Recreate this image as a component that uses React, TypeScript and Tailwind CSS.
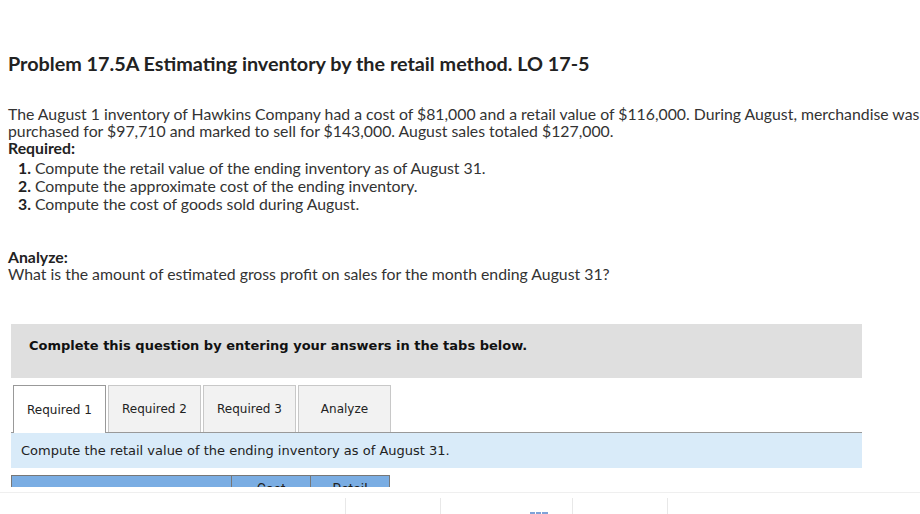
import React from 'react';

const tabs = ['Required 1', 'Required 2', 'Required 3', 'Analyze'];

function Tabs() {
  return (
    <div className="flex items-end gap-[2px] pl-[2px] border-b border-[#999]">
      {tabs.map((t, i) =>
        i === 0 ? (
          <div
            key={t}
            className="w-[93px] h-[48px] -mb-px flex items-center justify-center bg-white border border-b-0 border-[#999] text-[12px] text-[#222]"
          >
            {t}
          </div>
        ) : (
          <div
            key={t}
            className="w-[93px] h-[47px] flex items-center justify-center bg-[#f2f2f2] border border-b-0 border-[#c8c8c8] text-[12px] text-[#222]"
          >
            {t}
          </div>
        )
      )}
    </div>
  );
}

export default function App() {
  return (
    <div className="min-h-screen bg-white text-[#333] pl-[8px] font-['Lato','Noto_Sans',sans-serif]">
      <h1 className="pt-[51px] h-[75px] leading-[24px] text-[19.8px] font-bold text-[#222]">
        Problem 17.5A Estimating inventory by the retail method. LO 17-5
      </h1>

      <div className="mt-[30px] text-[15.8px] leading-[17px] whitespace-nowrap">
        <p>
          The August 1 inventory of Hawkins Company had a cost of $81,000 and a retail value of $116,000. During
          August, merchandise was
          <br />
          purchased for $97,710 and marked to sell for $143,000. August sales totaled $127,000.
        </p>
        <p className="font-bold text-[#222]">Required:</p>
        <ol className="mt-[3px] pl-[10px] leading-[18px]">
          <li>
            <span className="font-bold text-[#222]">1.</span> Compute the retail value of the ending inventory as of
            August 31.
          </li>
          <li>
            <span className="font-bold text-[#222]">2.</span> Compute the approximate cost of the ending inventory.
          </li>
          <li>
            <span className="font-bold text-[#222]">3.</span> Compute the cost of goods sold during August.
          </li>
        </ol>

        <p className="mt-[35px] font-bold text-[#222]">Analyze:</p>
        <p>What is the amount of estimated gross profit on sales for the month ending August 31?</p>
      </div>

      <div className="ml-[3px] w-[851px] font-['DejaVu_Sans',Verdana,sans-serif]">
        <div className="mt-[42px] h-[54px] bg-[#dfdfdf] pl-[18px] pt-[14px] leading-[16px] text-[13px] font-bold text-[#111]">
          Complete this question by entering your answers in the tabs below.
        </div>

        <div className="mt-[7px]">
          <Tabs />
        </div>

        <div className="h-[35px] bg-[#d9ebf9] pl-[10px] flex items-center text-[13px] text-[#222]">
          Compute the retail value of the ending inventory as of August 31.
        </div>

        <table className="mt-[7px] w-[379px] border-collapse font-['Roboto',sans-serif] text-[14px] leading-[16px] text-[#222]">
          <thead>
            <tr className="bg-[#7aade3] h-[30px]">
              <th className="w-[221px] border border-[#777]"></th>
              <th className="w-[79px] border border-[#777] font-normal align-top pt-[5px]">Cost</th>
              <th className="w-[79px] border border-[#777] font-normal align-top pt-[5px]">Retail</th>
            </tr>
          </thead>
        </table>
        <div className="h-[40px]" />
      </div>

      <div className="fixed left-0 right-0 bottom-0 h-[27px] bg-white pt-[5px]">
        <div className="h-full border-t border-[#efefef] flex">
          <div className="w-[345px]" />
          <div className="w-[95px] mt-[5px] border-l border-[#e8e8e8]" />
          <div className="w-[132px] mt-[5px] border-l border-[#e8e8e8] pl-[89px] pt-[14px]">
            <svg width="18" height="6" viewBox="0 0 18 6" className="block">
              <rect x="0" y="0" width="5" height="6" fill="#7fa3d8" />
              <rect x="6" y="0" width="5" height="6" fill="#7fa3d8" />
              <rect x="12" y="0" width="6" height="6" fill="#7fa3d8" />
            </svg>
          </div>
          <div className="w-[95px] mt-[5px] border-l border-[#e8e8e8]" />
          <div className="flex-1 mt-[5px] border-l border-[#e8e8e8]" />
        </div>
      </div>
    </div>
  );
}
